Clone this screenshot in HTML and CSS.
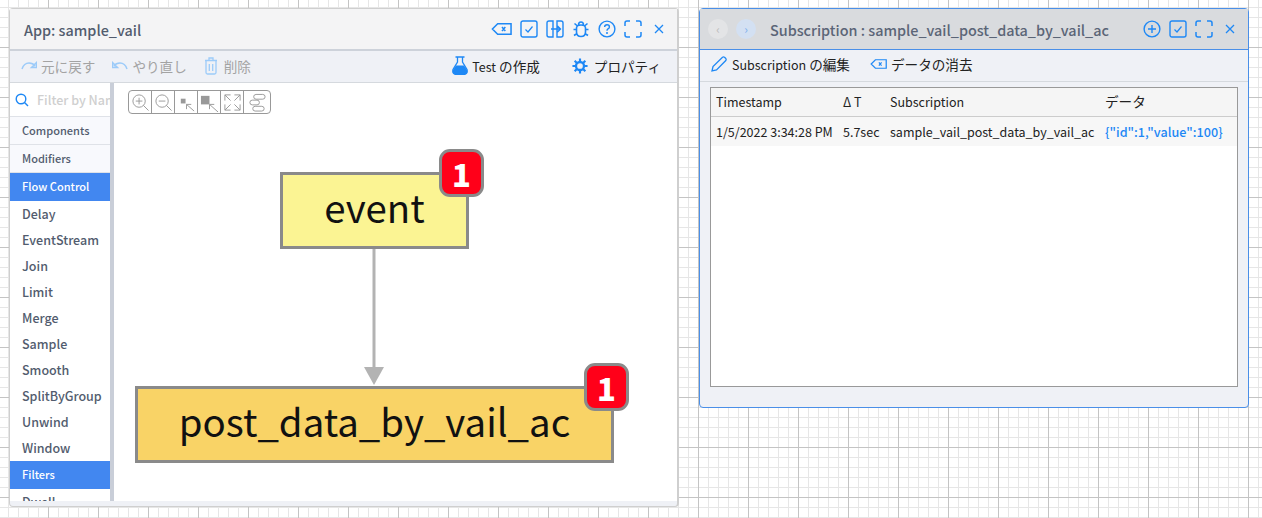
FILE: index.html
```html
<!DOCTYPE html>
<html lang='en'>
<head>
    <meta charset='UTF-8'>
    <title>App: sample_vail</title>
    <link rel="stylesheet" href="styles.css">
</head>
<body>
    <svg class='defs' width='0' height='0'>
        <symbol id='i-clear' viewBox='0 0 22 14'><path d='M7 1.5H21V12.5H7L1.5 7Z M11.5 5L15 9M15 5L11.5 9' fill='none' stroke='currentColor' stroke-width='1.6'/></symbol>
        <symbol id='i-check' viewBox='0 0 18 18'><rect x='1' y='1' width='16' height='16' rx='2' fill='none' stroke='currentColor' stroke-width='1.4'/><path d='M5.5 9.5L8 12L12.5 6.5' fill='none' stroke='currentColor' stroke-width='1.2'/></symbol>
        <symbol id='i-expand' viewBox='0 0 18 18'><path d='M1 6V3Q1 1 3 1H6M12 1H15Q17 1 17 3V6M17 12V15Q17 17 15 17H12M6 17H3Q1 17 1 15V12' fill='none' stroke='currentColor' stroke-width='1.5'/></symbol>
        <symbol id='i-close' viewBox='0 0 10 10'><path d='M1 1L9 9M9 1L1 9' fill='none' stroke='currentColor' stroke-width='1.3'/></symbol>
    </svg>

    <div class='window app-window'>
        <div class='titlebar'>
            <span class='title'>App: sample_vail</span>
            <div class='title-icons'>
                <svg class='ic-clear'><use href='#i-clear'/></svg>
                <svg class='ic-18'><use href='#i-check'/></svg>
                <svg class='ic-18' viewBox='0 0 18 18'><path d='M7 1H3Q1 1 1 3V15Q1 17 3 17H7V1ZM11 1H15Q17 1 17 3V15Q17 17 15 17H11V1ZM5 9H14M11.5 6L14.5 9L11.5 12' fill='none' stroke='currentColor' stroke-width='1.4'/></svg>
                <svg class='ic-18' viewBox='0 0 18 18'><path d='M4.5 8Q4.5 5 9 5Q13.5 5 13.5 8V12Q13.5 16.5 9 16.5Q4.5 16.5 4.5 12ZM6.5 5Q6.5 2 9 2Q11.5 2 11.5 5M4.5 9.5H1.5M13.5 9.5H16.5M5 13.5L2 15.5M13 13.5L16 15.5M5.5 6L2.5 3.5M12.5 6L15.5 3.5' fill='none' stroke='currentColor' stroke-width='1.6'/></svg>
                <svg class='ic-18' viewBox='0 0 18 18'><circle cx='9' cy='9' r='7.9' fill='none' stroke='currentColor' stroke-width='1.4'/><path d='M6.6 7Q6.8 4.8 9 4.8Q11.4 4.8 11.4 6.9Q11.4 8 10 8.8Q9 9.4 9 10.8' fill='none' stroke='currentColor' stroke-width='1.4'/><circle cx='9' cy='13' r='1' fill='currentColor'/></svg>
                <svg class='ic-18'><use href='#i-expand'/></svg>
                <svg class='ic-close'><use href='#i-close'/></svg>
            </div>
        </div>
        <div class='toolbar'>
            <span class='tool disabled'>
                <svg class='ic-undo' viewBox='0 0 16 10'><path d='M1 8Q3 2 8 2Q12 2 14 5M15.5 1.5V6.5H10.5Z' fill='none' stroke='currentColor' stroke-width='1.5'/></svg>
                元に戻す
            </span>
            <span class='tool disabled'>
                <svg class='ic-undo' viewBox='0 0 16 10'><path d='M15 8Q13 2 8 2Q4 2 2 5M.5 1.5V6.5H5.5Z' fill='none' stroke='currentColor' stroke-width='1.5'/></svg>
                やり直し
            </span>
            <span class='tool disabled'>
                <svg class='ic-trash' viewBox='0 0 14 18'><path d='M1 3.5H13M5 3V1H9V3M2 4V15.5Q2 17 3.5 17H10.5Q12 17 12 15.5V4M5.3 7V14M8.7 7V14' fill='none' stroke='currentColor' stroke-width='1.3'/></svg>
                削除
            </span>
            <span class='tool-spacer'></span>
            <span class='tool'>
                <svg class='ic-flask' viewBox='0 0 16 19'><path d='M3.5 1H12.5M5.5 1V6L1 13.5Q0 18 4 18.5H12Q16 18 15 13.5L10.5 6V1' fill='none' stroke='#1e88f5' stroke-width='1.3'/><path d='M4 9.5H12L15 14Q16 18.5 12 18.5H4Q0 18.5 1 14Z' fill='#1e88f5'/></svg>
                <span><span class='lat'>Test</span> の作成</span>
            </span>
            <span class='tool tool-props'>
                <svg class='ic-gear' viewBox='0 0 18 18'><circle cx='9' cy='9' r='4.5' fill='none' stroke='#1e88f5' stroke-width='2.6'/><path d='M9 0.5V4M9 14V17.5M.5 9H4M14 9H17.5M3 3L5.5 5.5M12.5 12.5L15 15M15 3L12.5 5.5M5.5 12.5L3 15' fill='none' stroke='#1e88f5' stroke-width='2.4'/></svg>
                プロパティ
            </span>
        </div>
        <div class='app-body'>
            <div class='sidebar'>
                <div class='search'>
                    <svg class='ic-search' viewBox='0 0 14 14'><circle cx='6' cy='6' r='4.8' fill='none' stroke='#1e88f5' stroke-width='1.4'/><path d='M9.5 9.5L13 13' stroke='#1e88f5' stroke-width='1.4'/></svg>
                    <span class='search-hint'>Filter by Name</span>
                </div>
                <div class='group'>Components</div>
                <div class='group'>Modifiers</div>
                <div class='group active'>Flow Control</div>
                <div class='item'>Delay</div>
                <div class='item'>EventStream</div>
                <div class='item'>Join</div>
                <div class='item'>Limit</div>
                <div class='item'>Merge</div>
                <div class='item'>Sample</div>
                <div class='item'>Smooth</div>
                <div class='item'>SplitByGroup</div>
                <div class='item'>Unwind</div>
                <div class='item'>Window</div>
                <div class='group active'>Filters</div>
                <div class='item'>Dwell</div>
            </div>
            <div class='canvas'>
                <div class='graph-tools'>
                    <span class='gt w24'><svg viewBox='0 0 20 20'><circle cx='8.5' cy='8.5' r='6.5' fill='none' stroke='#999'/><path d='M5 8.5H12M8.5 5V12M13 13L18.5 18.5' fill='none' stroke='#999'/></svg></span>
                    <span class='gt w23'><svg viewBox='0 0 20 20'><circle cx='8.5' cy='8.5' r='6.5' fill='none' stroke='#999'/><path d='M5 8.5H12M13 13L18.5 18.5' fill='none' stroke='#999'/></svg></span>
                    <span class='gt w24'><svg viewBox='0 0 20 20'><rect x='4' y='6' width='5' height='5' fill='#999'/><path d='M18 19L10 12M10 17V12H15' fill='none' stroke='#999'/></svg></span>
                    <span class='gt w23'><svg viewBox='0 0 20 20'><rect x='1' y='3' width='9' height='9' fill='#999'/><path d='M19 20L10 12M10 17V12H15' fill='none' stroke='#999'/></svg></span>
                    <span class='gt w23'><svg viewBox='0 0 20 20'><path d='M2 8V2H8M2 2L8 8M12 2H18V8M18 2L12 8M2 12V18H8M2 18L8 12M18 12V18H12M18 18L12 12' fill='none' stroke='#999'/></svg></span>
                    <span class='gt w26'><svg viewBox='0 0 20 20'><rect x='6' y='1.5' width='12' height='5' rx='2.5' fill='none' stroke='#999'/><rect x='2' y='7.5' width='10' height='5' rx='2.5' fill='none' stroke='#999'/><rect x='5' y='14' width='12' height='5' rx='2.5' fill='none' stroke='#999'/></svg></span>
                </div>

                <svg class='edge' viewBox='0 0 22 138'><path d='M11 0V120' stroke='#b3b3b3' stroke-width='3'/><path d='M1 119H21L11 137Z' fill='#b3b3b3'/></svg>
                <div class='node node-event'><span class='node-label'>event</span><span class='badge'>1</span></div>
                <div class='node node-post'><span class='node-label'>post_data_by_vail_ac</span><span class='badge'>1</span></div>
            </div>
        </div>
    </div>

    <div class='window sub-window'>
        <div class='titlebar sub-titlebar'>
            <span class='nav-btn'>‹</span>
            <span class='nav-btn next'>›</span>
            <span class='title sub-title'>Subscription : sample_vail_post_data_by_vail_ac</span>
            <div class='title-icons sub-icons'>
                <svg class='ic-18' viewBox='0 0 18 18'><circle cx='9' cy='9' r='7.9' fill='none' stroke='currentColor' stroke-width='1.4'/><path d='M5 9H13M9 5V13' fill='none' stroke='currentColor' stroke-width='1.4'/></svg>
                <svg class='ic-18'><use href='#i-check'/></svg>
                <svg class='ic-18'><use href='#i-expand'/></svg>
                <svg class='ic-close'><use href='#i-close'/></svg>
            </div>
        </div>
        <div class='toolbar sub-toolbar'>
            <span class='tool tool-edit'>
                <svg class='ic-pencil' viewBox='0 0 16 16'><path d='M1 15L2 10.5L11.5 1.2Q12.5 .5 13.5 1.2L14.8 2.5Q15.5 3.5 14.8 4.5L5.5 14Z' fill='none' stroke='#1e88f5' stroke-width='1.3'/></svg>
                <span><span class='lat'>Subscription</span> の編集</span>
            </span>
            <span class='tool'>
                <svg class='ic-clear'><use href='#i-clear'/></svg>
                データの消去
            </span>
        </div>
        <div class='table-box'>
            <table>
                <tr>
                    <th class='col-ts'>Timestamp</th>
                    <th class='col-dt'>Δ T</th>
                    <th class='col-sub'>Subscription</th>
                    <th class='col-data'>データ</th>
                </tr>
                <tr>
                    <td>1/5/2022 3:34:28 PM</td>
                    <td>5.7sec</td>
                    <td>sample_vail_post_data_by_vail_ac</td>
                    <td class='json'>{"id":1,"value":100}</td>
                </tr>
            </table>
        </div>
    </div>
</body>
</html>
```

FILE: styles.css
```css
html, body {
    padding:0px;
    margin:0px;
    height:518px;
    overflow:hidden;
    font-family:"Noto Sans CJK JP", "Noto Sans", sans-serif;
    background-color:#fff;
    background-image:
        linear-gradient(90deg, #c4c4c4 1px, transparent 1px),
        linear-gradient(#c4c4c4 1px, transparent 1px),
        linear-gradient(90deg, #e6e6e6 1px, transparent 1px),
        linear-gradient(#e6e6e6 1px, transparent 1px);
    background-size:50px 50px, 50px 50px, 10px 10px, 10px 10px;
    background-position:48px 47px, 48px 47px, 8px 7px, 8px 7px;
}

.defs {
    display:block;
    height:0;
}

.window {
    position:absolute;
    box-sizing:border-box;
    background:#eff1f6;
    display:flex;
    flex-direction:column;
    border-radius:4px;
}

.app-window {
    left:9px;
    top:8px;
    width:670px;
    height:499px;
    border:1px solid #cfcfcf;
    border-right-width:2px;
}

.sub-window {
    left:699px;
    top:8px;
    width:550px;
    height:400px;
    border:1px solid #4a8fe8;
}

.titlebar {
    height:40px;
    flex:none;
    display:flex;
    align-items:center;
    background:#f4f4f5;
    border-bottom:2px solid #cdd2da;
    box-sizing:content-box;
    padding:0 14px;
}

.title {
    font-size:14.4px;
    font-weight:500;
    color:#525c6e;
}

.title-icons {
    margin-left:auto;
    display:flex;
    align-items:center;
    gap:8px;
    color:#1e88f5;
    margin-right:-1px;
}

.ic-18 {
    width:18px;
    height:18px;
}

.ic-clear {
    width:21px;
    height:14px;
    color:#1e88f5;
}

.ic-close {
    width:10px;
    height:10px;
    margin-left:4px;
}

.toolbar {
    height:32px;
    flex:none;
    box-sizing:border-box;
    display:flex;
    align-items:center;
    gap:17px;
    padding:0 16px 2px 11px;
    border-bottom:1px solid #d5d9de;
    font-size:13.6px;
    color:#222;
}

.tool {
    display:flex;
    align-items:center;
    gap:4px;
    white-space:nowrap;
}

.tool.disabled {
    color:#a3a3a3;
}

.tool.disabled svg {
    color:#9ccbf9;
}

.tool-spacer {
    flex:1;
}

.tool-props {
    gap:6px;
    margin-left:15px;
}

.lat {
    font-size:12.5px;
}

.ic-undo {
    width:16px;
    height:10px;
}

.ic-trash {
    width:14px;
    height:18px;
    margin-right:2px;
}

.ic-flask {
    width:16px;
    height:19px;
}

.ic-gear {
    width:16px;
    height:16px;
}

.ic-pencil {
    width:16px;
    height:16px;
}

.app-body {
    flex:1;
    display:flex;
    min-height:0;
    padding-bottom:5px;
}

.sidebar {
    width:100px;
    flex:none;
    background:white;
    overflow:hidden;
    border-right:4px solid #c9ced8;
    font-size:12.5px;
    font-weight:500;
    color:#525c6e;
}

.search {
    height:33px;
    display:flex;
    align-items:center;
    gap:8px;
    padding-left:5px;
    border-bottom:1px solid #dfe2e8;
    white-space:nowrap;
    overflow:hidden;
}

.ic-search {
    width:14px;
    height:14px;
    flex:none;
}

.search-hint {
    color:#cfcfcf;
    font-size:12.5px;
}

.group {
    height:27px;
    line-height:27px;
    padding-left:12px;
    font-size:11px;
    background:#f8f9fd;
    border-bottom:1px solid #dfe2e8;
}

.group.active {
    height:28px;
    line-height:27px;
    background:#4287f0;
    color:white;
    border-bottom:0;
}

.item {
    height:26px;
    line-height:26px;
    padding-left:12px;
}

.canvas {
    position:relative;
    flex:1;
    background:white;
    overflow:hidden;
}

.graph-tools {
    position:absolute;
    left:14px;
    top:7px;
    display:flex;
    height:24px;
    box-sizing:border-box;
    border:1px solid #999;
    border-radius:4px;
}

.gt {
    display:flex;
    align-items:center;
    justify-content:center;
    box-sizing:border-box;
    border-right:1px solid #999;
}

.gt:last-child {
    border-right:0;
}

.gt svg {
    width:19px;
    height:19px;
}

.w23 { width:23px; }
.w24 { width:23px; }
.w26 { width:26px; }

.edge {
    position:absolute;
    left:249px;
    top:165px;
    width:22px;
    height:138px;
}

.node {
    position:absolute;
    box-sizing:border-box;
    border:3px solid #8a8a8a;
    display:flex;
    align-items:center;
    justify-content:center;
    font-size:38.4px;
    color:#111;
    white-space:nowrap;
}

.node-label {
    margin-bottom:10px;
}

.node-event {
    left:166px;
    top:89px;
    width:189px;
    height:77px;
    background:#fbf493;
}

.node-post {
    left:21px;
    top:303px;
    width:479px;
    height:77px;
    background:#f9d366;
}

.badge {
    position:absolute;
    right:-18px;
    top:-26px;
    box-sizing:border-box;
    width:45px;
    height:48px;
    border:3px solid #8a8a8a;
    border-radius:11px;
    background:#ff0019;
    color:white;
    font-size:31px;
    font-weight:900;
    display:flex;
    align-items:center;
    justify-content:center;
}

.sub-titlebar {
    height:40px;
    background:#d9dbde;
    border-bottom:1px solid #4a8fe8;
    padding:0 14px 0 8px;
}

.nav-btn {
    width:20px;
    height:20px;
    margin-right:8px;
    border-radius:50%;
    background:#e3e4e6;
    color:#bbb;
    font-size:12px;
    line-height:19px;
    text-align:center;
}

.nav-btn.next {
    background:#d3e0f2;
    color:#7fb0ee;
}

.sub-title {
    margin-left:6px;
    color:#5b6577;
}

.sub-toolbar {
    height:32px;
    gap:20px;
    padding-bottom:4px;
}

.tool-edit {
    gap:5px;
}

.sub-toolbar .ic-clear {
    width:17px;
    height:12px;
}

.table-box {
    box-sizing:border-box;
    margin:5px 10px 20px 10px;
    flex:1;
    border:1px solid #999;
    background:white;
}

table {
    width:100%;
    border-collapse:collapse;
    table-layout:fixed;
    font-size:12.5px;
    color:#222;
}

th {
    height:26px;
    padding:0 0 2px 5px;
    text-align:left;
    font-weight:400;
    background:#f5f5f5;
    border-bottom:1px solid #ccc;
}

td {
    height:29px;
    padding:0 0 0 5px;
    background:#f7f7f7;
    white-space:nowrap;
}

.col-ts { width:122px; }
.col-dt { width:42px; }
.col-sub { width:210px; }

.col-data {
    font-size:13.6px;
}

.json {
    color:#1e88f5;
    font-size:12.6px;
    font-weight:500;
}
```
